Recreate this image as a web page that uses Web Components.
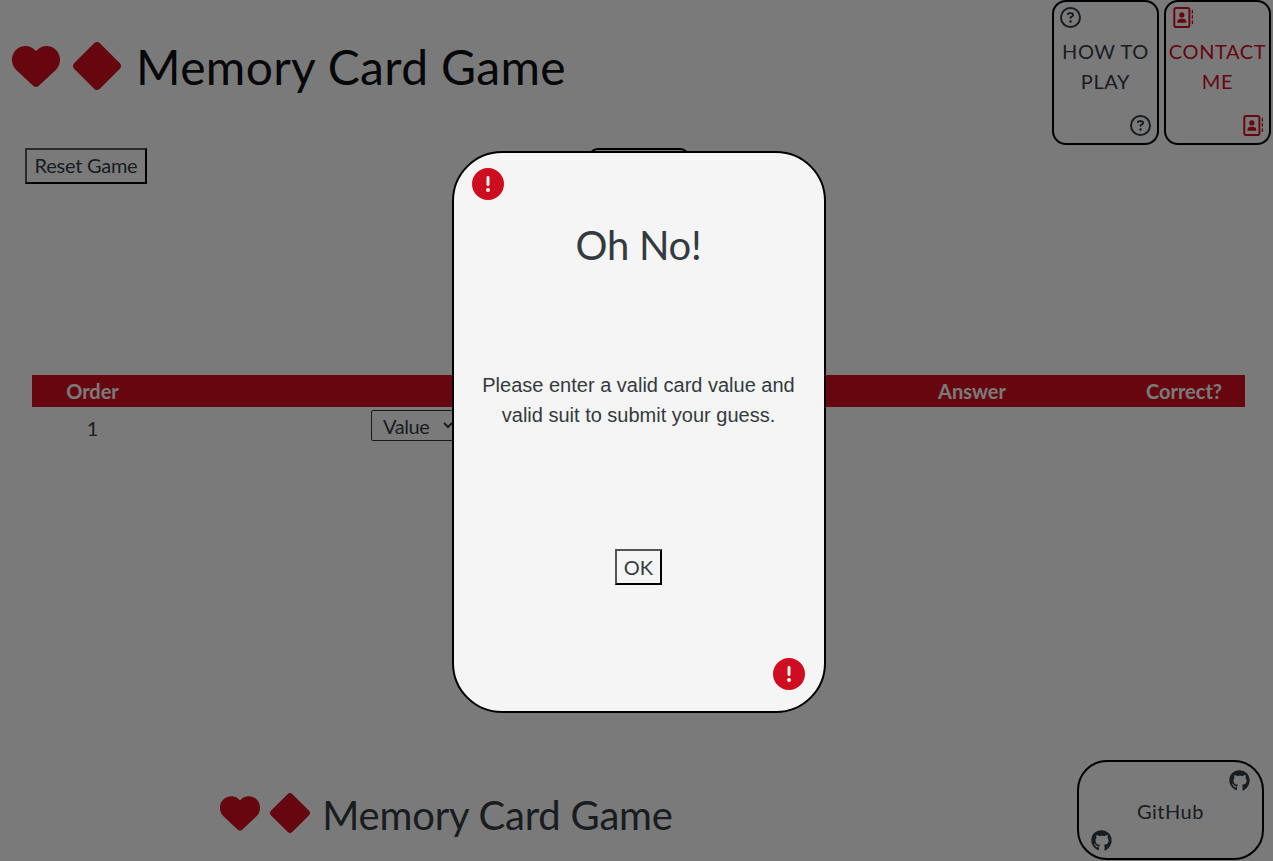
<!DOCTYPE html>
<html lang="en"><head><meta charset="utf-8"><title>Memory Card Game</title>
<style>
html,body{margin:0;height:861px;overflow:hidden}
body{background:#f5f5f5;color:#343a40;font-family:Lato,sans-serif;font-size:20px;display:flex;flex-direction:column}
game-main{flex:1}
</style></head><body>
<game-header></game-header>
<game-main></game-main>
<game-footer></game-footer>
<alert-dialog heading="Oh No!" ok="OK">Please enter a valid card value and valid suit to submit your guess.</alert-dialog>
<script>
const P={
heart:[512,"M47.6 300.4L228.3 469.1c7.5 7 17.4 10.9 27.7 10.9s20.2-3.9 27.7-10.9L464.4 300.4c30.4-28.3 47.6-68 47.6-109.5v-5.8c0-69.9-50.5-129.5-119.4-141C347 36.5 300.6 51.4 268 84L256 96 244 84c-32.6-32.6-79-47.5-124.6-39.9C50.5 55.6 0 115.2 0 185.1v5.8c0 41.5 17.2 81.2 47.6 109.5z"],
diamond:[512,"M284.3 11.7c-15.6-15.6-40.9-15.6-56.6 0l-216 216c-15.6 15.6-15.6 40.9 0 56.6l216 216c15.6 15.6 40.9 15.6 56.6 0l216-216c15.6-15.6 15.6-40.9 0-56.6l-216-216z"],
question:[512,"M464 256A208 208 0 1 0 48 256a208 208 0 1 0 416 0zM0 256a256 256 0 1 1 512 0A256 256 0 1 1 0 256zm169.8-90.7c7.9-22.3 29.1-37.3 52.8-37.3h58.3c34.9 0 63.1 28.3 63.1 63.1c0 22.6-12.1 43.5-31.7 54.8L280 264.4c-.2 13-10.9 23.6-24 23.6c-13.3 0-24-10.7-24-24V250.5c0-8.6 4.6-16.5 12.1-20.8l44.3-25.4c4.7-2.7 7.6-7.7 7.6-13.1c0-8.4-6.8-15.1-15.1-15.1H222.6c-3.4 0-6.4 2.1-7.5 5.3l-.4 1.2c-4.4 12.5-18.2 19-30.6 14.6s-19-18.2-14.6-30.6l.4-1.2zM224 352a32 32 0 1 1 64 0 32 32 0 1 1 -64 0z"],
book:[512,"M384 48c8.8 0 16 7.2 16 16V448c0 8.8-7.2 16-16 16H96c-8.8 0-16-7.2-16-16V64c0-8.8 7.2-16 16-16H384zM96 0C60.7 0 32 28.7 32 64V448c0 35.3 28.7 64 64 64H384c35.3 0 64-28.7 64-64V64c0-35.3-28.7-64-64-64H96zM240 256a64 64 0 1 0 0-128 64 64 0 1 0 0 128zm-32 32c-44.2 0-80 35.8-80 80c0 8.8 7.2 16 16 16H336c8.8 0 16-7.2 16-16c0-44.2-35.8-80-80-80H208zM512 80c0-8.8-7.2-16-16-16s-16 7.2-16 16v64c0 8.8 7.2 16 16 16s16-7.2 16-16V80zM496 192c-8.8 0-16 7.2-16 16v64c0 8.8 7.2 16 16 16s16-7.2 16-16V208c0-8.8-7.2-16-16-16zm16 144c0-8.8-7.2-16-16-16s-16 7.2-16 16v64c0 8.8 7.2 16 16 16s16-7.2 16-16V336z"],
alert:[512,"M256 512A256 256 0 1 0 256 0a256 256 0 1 0 0 512zm0-384c13.3 0 24 10.7 24 24V264c0 13.3-10.7 24-24 24s-24-10.7-24-24V152c0-13.3 10.7-24 24-24zM224 352a32 32 0 1 1 64 0 32 32 0 1 1 -64 0z"],
github:[496,"M165.9 397.4c0 2-2.3 3.6-5.2 3.6-3.3.3-5.6-1.3-5.6-3.6 0-2 2.3-3.6 5.2-3.6 3-.3 5.6 1.3 5.6 3.6zm-31.1-4.5c-.7 2 1.3 4.3 4.3 4.9 2.6 1 5.6 0 6.2-2s-1.3-4.3-4.3-5c-2.6-.7-5.5.3-6.2 2.1zm44.2-1.7c-2.9.7-4.9 2.6-4.6 4.9.3 2 2.9 3.3 5.9 2.6 2.9-.7 4.9-2.6 4.6-4.6-.3-1.9-3-3.2-5.9-2.9zM244.8 8C106.1 8 0 113.3 0 252c0 110.9 69.8 205.8 169.5 239.2 12.8 2.3 17.3-5.6 17.3-12.1 0-6.2-.3-40.4-.3-61.4 0 0-70 15-84.7-29.8 0 0-11.4-29.1-27.8-36.6 0 0-22.9-15.7 1.6-15.4 0 0 24.9 2 38.6 25.8 21.9 38.6 58.6 47.6 84.1 33.5 2.3-16 8.8-27.1 16-33.7-55.9-6.2-112.3-14.3-112.3-110.5 0-27.5 7.6-41.3 23.6-58.9-2.6-6.5-11.1-33.3 2.6-67.9 20.9-6.5 69 27 69 27 20-5.6 41.5-8.5 62.8-8.5s42.8 2.9 62.8 8.5c0 0 48.1-33.6 69-27 13.7 34.7 5.2 61.4 2.6 67.9 16 17.7 25.8 31.5 25.8 58.9 0 96.5-58.9 104.2-114.8 110.5 9.2 7.9 17 22.9 17 46.4 0 33.7-.3 75.4-.3 83.6 0 6.5 4.6 14.4 17.3 12.1C428.2 457.8 496 362.9 496 252 496 113.3 383.5 8 244.8 8zM97.2 352.9c-1.3 1-1 3.3.7 5.2 1.6 1.6 3.9 2.3 5.2 1 1.3-1 1-3.3-.7-5.2-1.6-1.6-3.9-2.3-5.2-1zm-10.8-8.1c-.7 1.3.3 2.9 2.3 3.9 1.6 1 3.6.7 4.3-.7.7-1.3-.3-2.9-2.3-3.9-2-.6-3.6-.3-4.3.7zm32.4 35.6c-1.6 1.3-1 4.3 1.3 6.2 2.3 2.3 5.2 2.6 6.5 1 1.3-1.3.7-4.3-1.3-6.2-2.2-2.3-5.2-2.6-6.5-1zm-11.4-14.7c-1.6 1-1.6 3.6 0 5.9 1.6 2.3 4.3 3.3 5.6 2.3 1.6-1.3 1.6-3.9 0-6.2-1.4-2.3-4-3.3-5.6-2z"]
};
function def(name,html){customElements.define(name,class extends HTMLElement{
 connectedCallback(){if(this.shadowRoot)return;const r=this.attachShadow({mode:'open'});r.innerHTML=typeof html==='function'?html(this):html;}
});}
def('x-icon',el=>{const [w,d]=P[el.getAttribute('name')];const s=el.getAttribute('size')||20;
 return `<style>:host{display:block;width:${s}px;height:${s}px;flex:none}svg{display:block;width:100%;height:100%;fill:currentColor}</style><svg viewBox="0 0 ${w} 512" aria-hidden="true"><path d="${d}"/></svg>`});
def('brand-logo',el=>{const s=+el.getAttribute('size'),g=+el.getAttribute('gap'),tg=+el.getAttribute('tgap'),ls=el.getAttribute('ls'),c=el.getAttribute('color');
 return `<style>:host{display:flex;align-items:center;color:var(--red)}
 h1{margin:0 0 0 ${tg}px;padding-top:3px;font:400 ${s}px/1 Lato,sans-serif;letter-spacing:${ls}px;color:${c};white-space:nowrap}
 x-icon+x-icon{margin-left:${g}px}</style>
 <x-icon name="heart" size="${s}"></x-icon><x-icon name="diamond" size="${s}"></x-icon><h1>Memory Card Game</h1>`});
def('nav-card',el=>{const i=el.getAttribute('icon');
 return `<style>:host{display:flex;flex-direction:column;box-sizing:border-box;width:107px;height:145px;border:2px solid #000;border-radius:14px;padding:5px 6px 7px;color:${el.getAttribute('color')}}
 .t{flex:1;text-align:center;font-size:20px;line-height:30px;letter-spacing:.6px;margin:8px -6px 0;white-space:pre-line}
 x-icon:last-child{align-self:flex-end}</style>
 <x-icon name="${i}" size="21"></x-icon><div class="t">${el.getAttribute('label')}</div><x-icon name="${i}" size="21"></x-icon>`});
def('game-header',`<style>:host{display:flex;justify-content:space-between;height:145px;padding:0 2px 0 12px;--red:#cd0c1f}
 brand-logo{height:131px}nav{display:flex;gap:5px}</style>
 <brand-logo size="48" gap="13" tgap="15" ls=".35" color="#0c0e10"></brand-logo>
 <nav><nav-card icon="question" label="HOW TO
PLAY" color="#343a40"></nav-card><nav-card icon="book" label="CONTACT
ME" color="#cd0c1f"></nav-card></nav>`);
def('game-main',`<style>:host{display:block}
 .top{display:grid;grid-template-columns:1fr 102px 1fr;padding:3px 20px 0 25px;height:230px;box-sizing:border-box}
 button{justify-self:start;align-self:start;font:20px/1 Lato,sans-serif;letter-spacing:-.25px;white-space:nowrap;color:inherit;background:#f5f5f5;border:2px outset #000;height:36px;padding:0 0 3px;width:122px}
 .deck{border:2px solid #000;border-radius:10px;height:204px;box-sizing:border-box}
 guess-table{margin:0 28px 0 32px}</style>
 <div class="top"><button>Reset Game</button><div class="deck"></div><span></span></div>
 <guess-table></guess-table>`);
def('guess-table',`<style>:host{display:block}
 table{border-collapse:collapse;table-layout:fixed;width:100%;font-size:20px}
 th{background:#cd0c1f;color:#f5f5f5;height:32px;padding:0;font-weight:700;text-align:center}
 td{padding:9px 0 0;text-align:center;vertical-align:top}
 td.c{padding-top:3px}
 .g{display:flex;gap:8px;width:232px;margin:auto}
 select{font:20px Lato,sans-serif;letter-spacing:-.4px;color:inherit;background:#f5f5f5;border:1px solid #333;border-radius:2px;height:31px;width:86px;padding:0 2px 0 7px}</style>
 <table><colgroup><col style="width:121px"><col style="width:668px"><col style="width:302px"><col style="width:122px"></colgroup>
 <thead><tr><th>Order</th><th></th><th>Answer</th><th>Correct?</th></tr></thead>
 <tbody><tr><td>1</td><td class="c"><div class="g"><select><option>Value</option></select></div></td><td></td><td></td></tr></tbody></table>`);
def('game-footer',`<style>:host{display:flex;justify-content:space-between;height:101px;padding-right:9px;--red:#cd0c1f}
 .l{width:893px;display:flex;justify-content:center;align-items:center;padding-top:5px;box-sizing:border-box}
 a{display:flex;flex-direction:column;box-sizing:border-box;width:187px;height:100px;border:2px solid #000;border-radius:30px;padding:8px 12px 7px;color:#343a40;text-decoration:none;font-size:20px}
 x-icon:first-child{align-self:flex-end}span{flex:1;text-align:center;display:flex;align-items:center;justify-content:center;letter-spacing:.5px}</style>
 <div class="l"><brand-logo size="40" gap="10" tgap="12" ls="-.2" color="#343a40"></brand-logo></div>
 <a href="#"><x-icon name="github" size="21"></x-icon><span>GitHub</span><x-icon name="github" size="21"></x-icon></a>`);
def('alert-dialog',el=>`<style>:host{position:fixed;inset:0;background:rgba(0,0,0,.5);display:flex;justify-content:center;padding-left:5px;box-sizing:border-box}
 .m{box-sizing:border-box;margin-top:151px;width:374px;height:562px;background:#f5f5f5;border:2px solid #000;border-radius:50px;padding:15px 19px 21px 18px;display:flex;flex-direction:column;color:#343a40}
 x-icon{color:#cf0d21}
 h2{margin:21px 0 0;text-align:center;font:400 40px/48px Lato,sans-serif;letter-spacing:-.3px;height:48px}
 p{margin:101px 0 0;text-align:center;font:20px/30px "Liberation Sans",Arial,sans-serif;height:60px}
 button{align-self:center;margin:119px 0 0;width:47px;height:36px;padding:0;font:20px Lato,sans-serif;color:inherit;background:#f5f5f5;border:2px outset #000}
 x-icon:last-child{align-self:flex-end;margin-top:auto}</style>
 <div class="m" role="alertdialog"><x-icon name="alert" size="32"></x-icon><h2>${el.getAttribute('heading')}</h2><p><slot></slot></p><button>${el.getAttribute('ok')}</button><x-icon name="alert" size="32"></x-icon></div>`);
</script></body></html>
